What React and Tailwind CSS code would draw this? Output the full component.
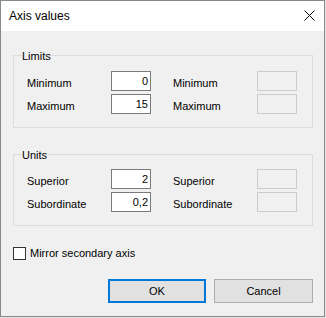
import React from 'react';

const font = { fontFamily: '"Liberation Sans", Arial, sans-serif' };

const Row = ({ label, value }) => (
  <div className="flex items-start h-[20px]">
    <div className="w-[84px] h-[20px] leading-[24px] text-[11px] text-black">{label}</div>
    <div className="w-[40px] h-[20px] border border-[#7a7a7a] bg-white text-right pr-[2px] text-[11px] leading-[18px] text-black">
      {value}
    </div>
    <div className="w-[22px]" />
    <div className="w-[84px] h-[20px] leading-[24px] text-[11px] text-black">{label}</div>
    <div className="w-[40px] h-[20px] border border-[#cccccc] bg-[#f0f0f0]" />
  </div>
);

const Group = ({ title, rows, className }) => (
  <div className={`relative w-[300px] border border-[#dcdcdc] ${className}`}>
    <span className="absolute left-[8px] top-[-6px] bg-[#f0f0f0] text-[11px] leading-[13px] text-black">
      {title}
    </span>
    <div className="flex flex-col gap-[3px] pl-[13px]">
      {rows.map((r, i) => (
        <Row key={i} label={r.label} value={r.value} />
      ))}
    </div>
  </div>
);

const App = () => {
  return (
    <div className="w-[326px] h-[318px] bg-[#e6e6e6]" style={font}>
      <div className="w-[325px] h-[317px] border border-[#888888] flex flex-col">
        <div className="h-[30px] bg-white flex items-center justify-between pl-[8px] pr-[9px]">
          <span className="text-[12px] leading-[30px] text-black">Axis values</span>
          <svg width="11" height="11" viewBox="0 0 11 11" className="mt-[-1px]">
            <path d="M0.5 0.5 L10.5 10.5 M10.5 0.5 L0.5 10.5" stroke="#000" strokeWidth="1" />
          </svg>
        </div>
        <div className="flex-1 bg-[#f0f0f0] pl-[12px] pt-[24px]">
          <Group
            title="Limits"
            className="h-[73px] pt-[15px]"
            rows={[
              { label: 'Minimum', value: '0' },
              { label: 'Maximum', value: '15' },
            ]}
          />
          <Group
            title="Units"
            className="h-[72px] pt-[14px] mt-[26px]"
            rows={[
              { label: 'Superior', value: '2' },
              { label: 'Subordinate', value: '0,2' },
            ]}
          />
          <div className="flex items-center mt-[21px] gap-[4px]">
            <div className="w-[13px] h-[13px] border border-[#333333] bg-white" />
            <span className="text-[11px] leading-[13px] text-black">Mirror secondary axis</span>
          </div>
          <div className="w-[300px] flex justify-end gap-[8px] mt-[19px]">
            <button className="w-[98px] h-[24px] border-2 border-[#0078d7] bg-[#e1e1e1] text-[11px] text-black">
              OK
            </button>
            <button className="w-[99px] h-[24px] border border-[#adadad] bg-[#e1e1e1] text-[11px] text-black">
              Cancel
            </button>
          </div>
        </div>
      </div>
    </div>
  );
};

export default App;
